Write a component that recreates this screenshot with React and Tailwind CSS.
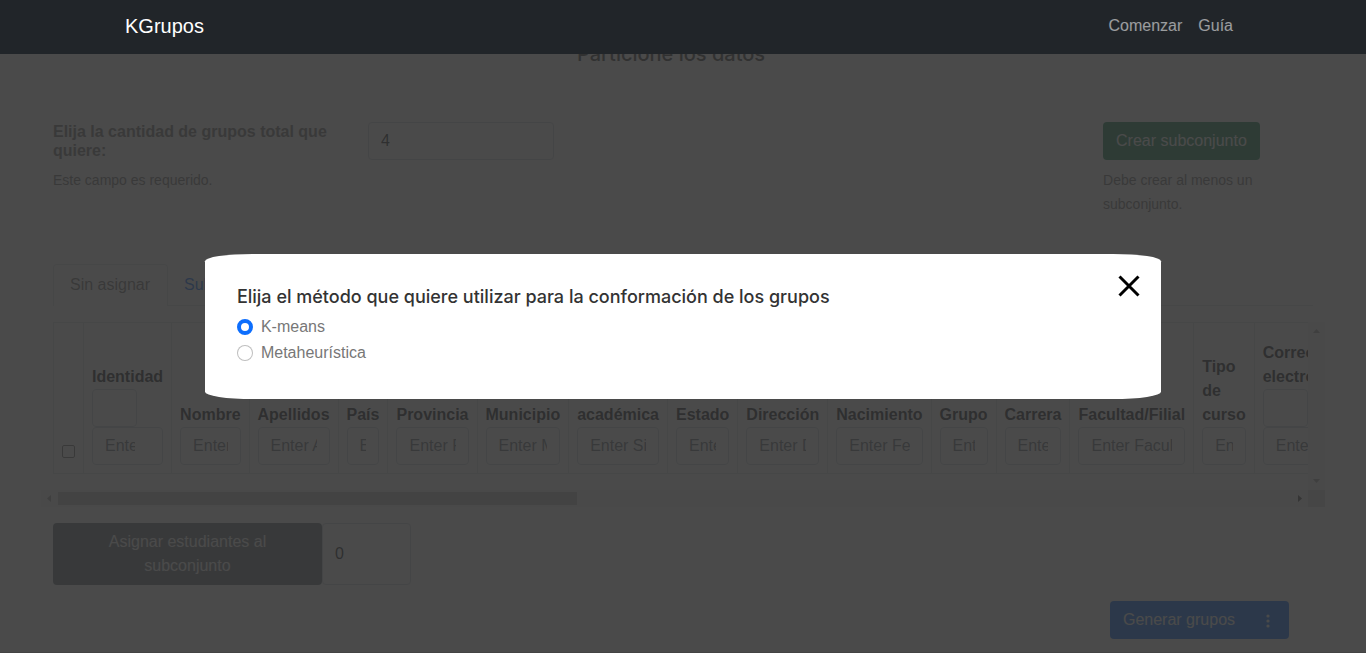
import { useState } from "react";

const columns = [
  { lines: ["Identidad"], hint: "Enter Identidad...", comparator: true, type: "number" },
  { lines: ["Nombre"], hint: "Enter Nombre..." },
  { lines: ["Apellidos"], hint: "Enter Apellidos..." },
  { lines: ["País"], hint: "Enter País..." },
  { lines: ["Provincia"], hint: "Enter Provincia..." },
  { lines: ["Municipio"], hint: "Enter Municipio..." },
  { lines: ["Situación", "académica"], hint: "Enter Situación académica..." },
  { lines: ["Estado"], hint: "Enter Estado..." },
  { lines: ["Dirección"], hint: "Enter Dirección..." },
  { lines: ["Fecha de", "Nacimiento"], hint: "Enter Fecha de Nacimiento..." },
  { lines: ["Grupo"], hint: "Enter Grupo..." },
  { lines: ["Carrera"], hint: "Enter Carrera..." },
  { lines: ["Facultad/Filial"], hint: "Enter Facultad/Filial..." },
  { lines: ["Tipo", "de", "curso"], hint: "Enter Tipo de curso..." },
  { lines: ["Correo", "electrónico"], hint: "Enter Correo electrónico...", comparator: true },
];

const field =
  "block h-[38px] rounded border border-[#ced4da] bg-white px-3 text-base text-[#212529] placeholder:text-[#6c757d]";

function Navbar() {
  return (
    <nav className="sticky top-0 z-20 flex h-[54px] items-center bg-[#212529] pb-[2px]">
      <div className="mx-auto flex w-full max-w-[1140px] items-center justify-between px-3">
        <a href="#inicio" className="text-xl leading-[30px] text-white">KGrupos</a>
        <div className="flex">
          <a href="#comenzar" className="px-2 text-base text-white/55">Comenzar</a>
          <a href="#guia" className="px-2 text-base text-white/55">Guía</a>
        </div>
      </div>
    </nav>
  );
}

function StudentTable() {
  return (
    <div className="grid grid-cols-[minmax(0,1fr)_17px]">
      <div className="h-[168px] overflow-hidden pl-3">
        <table className="w-max border-collapse text-left">
          <thead>
            <tr className="h-[151px]">
              <th className="border border-[#dee2e6] p-2 pb-[15px] align-bottom">
                <input
                  type="checkbox"
                  aria-label="Seleccionar todos"
                  className="block size-[13px] appearance-none rounded-xs border border-[#767676] bg-white"
                />
              </th>
              {columns.map((c) => (
                <th key={c.hint} className="border border-[#dee2e6] p-2 align-bottom font-bold text-[#212529]">
                  {c.lines.map((l) => (
                    <span key={l} className="block whitespace-nowrap leading-6">{l}</span>
                  ))}
                  {c.comparator && (
                    <select aria-label={"Comparador " + c.lines.join(" ")} className={field + " w-[45px] appearance-none"}>
                      <option></option>
                      <option>=</option>
                    </select>
                  )}
                  <input
                    type={c.type || "text"}
                    aria-label={c.lines.join(" ")}
                    placeholder={c.hint}
                    className={field + " w-0 min-w-full font-normal"}
                  />
                </th>
              ))}
            </tr>
          </thead>
        </table>
      </div>
      <div className="flex flex-col items-center justify-between bg-[#f1f1f1] py-[7px]">
        <svg width="7" height="4" viewBox="0 0 7 4"><path d="M0 4L3.5 0L7 4Z" fill="#a3a3a3" /></svg>
        <svg width="7" height="4" viewBox="0 0 7 4"><path d="M0 0L3.5 4L7 0Z" fill="#a3a3a3" /></svg>
      </div>
      <div className="flex h-[17px] items-center gap-1 bg-[#f1f1f1] px-[6px]">
        <svg width="4" height="7" viewBox="0 0 4 7"><path d="M4 0L0 3.5L4 7Z" fill="#a3a3a3" /></svg>
        <div className="flex-1 pl-[3px]">
          <div className="h-[13px] w-[42%] bg-[#c1c1c1]" />
        </div>
        <svg width="4" height="7" viewBox="0 0 4 7"><path d="M0 0L4 3.5L0 7Z" fill="#505050" /></svg>
      </div>
      <div className="bg-[#dcdcdc]" />
    </div>
  );
}

function MethodDialog() {
  const [method, setMethod] = useState("kmeans");
  const options = [
    ["kmeans", "K-means"],
    ["meta", "Metaheurística"],
  ];
  return (
    <div className="fixed inset-0 z-10 flex items-center justify-center bg-[rgba(49,49,49,0.88)]">
      <div role="dialog" aria-labelledby="metodo" className="relative w-[70%] rounded-[5%] bg-white p-8">
        <h2 id="metodo" className="mb-[7px] font-['Inter',sans-serif] text-[18px] leading-[22px] font-medium text-[#333333]">
          Elija el método que quiere utilizar para la conformación de los grupos
        </h2>
        {options.map(([id, label]) => (
          <div key={id} className="mb-[2px] flex items-center gap-2">
            <input
              type="radio"
              name="metodo"
              id={id}
              checked={method === id}
              onChange={() => setMethod(id)}
              className="size-4 appearance-none rounded-full border border-black/25 bg-white checked:border-[4px] checked:border-[#0d6efd]"
            />
            <label htmlFor={id} className="text-base leading-6 text-[#777777]">{label}</label>
          </div>
        ))}
        <button type="button" aria-label="Cerrar" className="absolute top-[21px] right-[21px] cursor-pointer">
          <svg width="22" height="22" viewBox="0 0 22 22" className="block">
            <path d="M1.5 1.5L20.5 20.5M20.5 1.5L1.5 20.5" stroke="#000" strokeWidth="3" />
          </svg>
        </button>
      </div>
    </div>
  );
}

export default function App() {
  return (
    <div className="h-screen overflow-hidden bg-white font-['Liberation_Sans',Arial,sans-serif] text-base text-[#777777]">
      <Navbar />
      <main>
        <section className="bg-[#f9f9f9] px-[3%] pb-[34px]">
          <h1 className="-mt-3 mr-6 mb-14 text-center font-['Inter',sans-serif] text-[20px] leading-6 font-medium text-[#333333]">
            Particione los datos
          </h1>
          <div className="mr-6 flex">
            <div className="w-1/4 px-3">
              <label htmlFor="cantidad" className="block leading-[19px] font-bold">
                Elija la cantidad de grupos total que quiere:
              </label>
              <small className="mt-2 block text-sm leading-6">Este campo es requerido.</small>
            </div>
            <div className="w-1/6 px-3">
              <input id="cantidad" type="text" defaultValue="4" className={field + " w-full"} />
            </div>
            <div className="ml-auto w-1/6 px-3">
              <button type="button" className="h-[38px] rounded bg-[#198754] px-[13px] whitespace-nowrap text-white">
                Crear subconjunto
              </button>
              <small className="mt-2 block text-sm leading-6">Debe crear al menos un subconjunto.</small>
            </div>
          </div>
        </section>

        <section className="px-[3%] pt-[14px]">
          <div role="tablist" className="mx-3 mb-4 flex h-[42px] border-b border-[#dee2e6]">
            <button type="button" role="tab" aria-selected="true" className="-mb-px rounded-t border border-b-0 border-[#dee2e6] bg-white pr-[17px] pl-4 pb-[2px] text-[#777777]">
              Sin asignar
            </button>
            <button type="button" role="tab" aria-selected="false" className="px-4 text-[#0d6efd]">
              Subconjunto 1
            </button>
          </div>
          <StudentTable />
        </section>

        <section className="bg-[#f9f9f9] px-[3%] pt-4 pb-[13px]">
          <div className="flex px-3">
            <button type="button" className="h-[62px] w-[269px] rounded bg-[#6c757d] px-10 leading-6 text-white">
              Asignar estudiantes al subconjunto
            </button>
            <input
              type="text"
              aria-label="Número de subconjunto"
              defaultValue="0"
              className="w-[89px] rounded border border-[#ced4da] bg-white px-3 text-[#212529]"
            />
          </div>
          <div className="mt-4 mr-9 flex justify-end">
            <button type="button" className="flex h-[38px] items-center rounded bg-[#0d6efd] pr-[19px] pl-[13px] text-white">
              Generar grupos
              <svg width="4" height="14" viewBox="0 0 4 14" className="mt-[2px] ml-[31px]" fill="#fff">
                <circle cx="2" cy="2" r="1.6" />
                <circle cx="2" cy="7" r="1.6" />
                <circle cx="2" cy="12" r="1.6" />
              </svg>
            </button>
          </div>
        </section>
        <footer className="h-10 bg-[#c4c4c4]" />
      </main>
      <MethodDialog />
    </div>
  );
}
